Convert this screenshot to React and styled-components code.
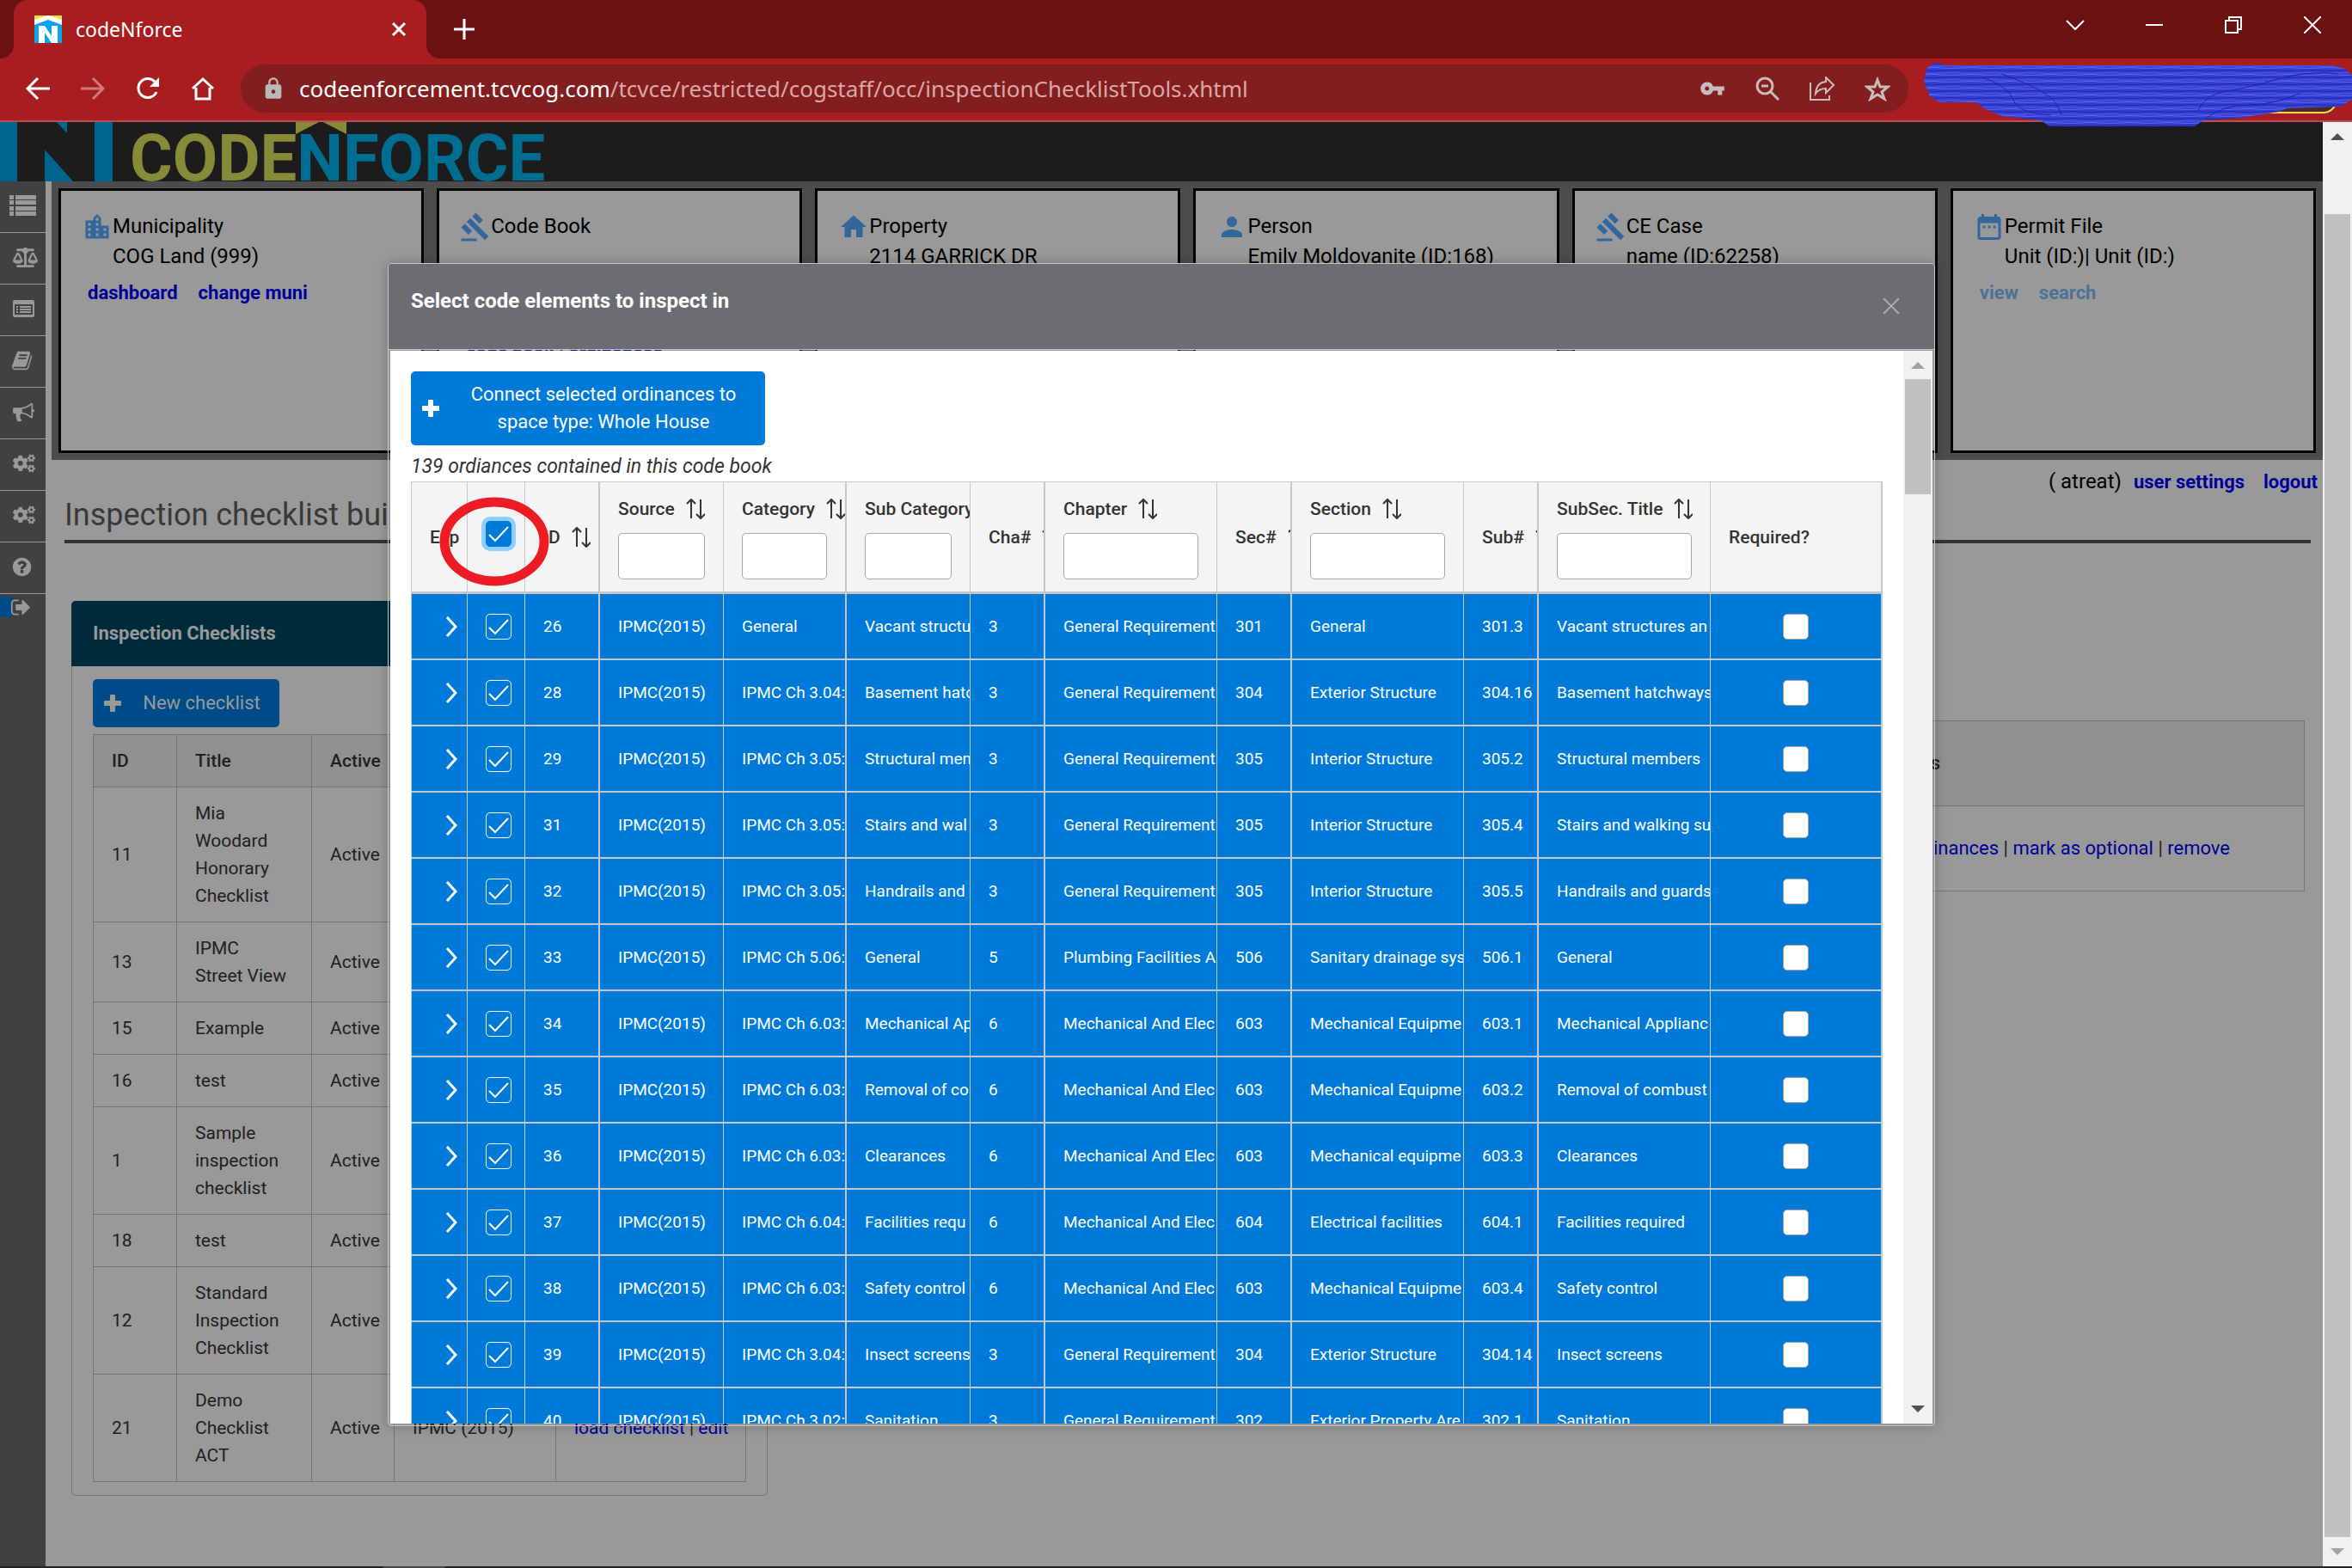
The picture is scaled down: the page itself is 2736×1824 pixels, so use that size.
import React from "react";
import styled, { createGlobalStyle } from "styled-components";
import { FaBalanceScale, FaCogs } from "react-icons/fa";
import { MdLocationCity, MdGavel, MdHome, MdPerson, MdDateRange, MdVpnKey, MdLock } from "react-icons/md";

const GlobalStyle = createGlobalStyle`
  *, *::before, *::after { box-sizing: border-box; }
  body { margin: 0; background: #999; font-family: Roboto, "Liberation Sans", sans-serif; }
  button, input { font: inherit; }
  h1, h2, p { margin: 0; }
`;

const Window = styled.div`
  display: flex;
  flex-direction: column;
  height: 100vh;
  overflow: hidden;
`;

/* ---------- browser chrome ---------- */

const Chrome = styled.header`
  position: relative;
  font-family: "Noto Sans", "Open Sans", sans-serif;
  color: #fff;
`;

const TabStrip = styled.div`
  display: flex;
  height: 68px;
  padding-left: 16px;
  background: #6b1211;
`;

const Tab = styled.div`
  position: relative;
  display: flex;
  align-items: center;
  gap: 16px;
  width: 480px;
  padding: 0 22px 0 24px;
  border-radius: 16px 16px 0 0;
  background: #a81d1f;
  font-size: 23px;

  &::before, &::after {
    content: "";
    position: absolute;
    bottom: 0;
    width: 16px;
    height: 16px;
  }
  &::before {
    left: -16px;
    background: radial-gradient(circle at 0 0, transparent 16px, #a81d1f 16px);
  }
  &::after {
    right: -16px;
    background: radial-gradient(circle at 100% 0, transparent 16px, #a81d1f 16px);
  }
`;

const TabTitle = styled.span`
  flex: 1;
`;

const IconButton = styled.button`
  display: grid;
  place-items: center;
  width: ${(p) => p.$w}px;
  height: ${(p) => p.$h || p.$w}px;
  padding: 0;
  border: 0;
  background: none;
  color: ${(p) => p.$color || "#fff"};
`;

const NewTab = styled(IconButton)`
  align-self: center;
  margin-left: 28px;
`;

const WindowControls = styled.div`
  display: flex;
  margin-left: auto;
`;

const Toolbar = styled.div`
  display: flex;
  align-items: center;
  gap: 24px;
  height: 74px;
  padding: 0 516px 2px 24px;
  border-bottom: 2px solid #b94f50;
  background: #a81d1f;
`;

const Omnibox = styled.div`
  display: flex;
  flex: 1;
  align-items: center;
  gap: 32px;
  height: 56px;
  padding: 0 20px 0 24px;
  border-radius: 28px;
  background: #821e1e;
  color: #c9bcbc;
`;

const Address = styled.span`
  display: flex;
  flex: 1;
  align-items: center;
  gap: 16px;
  color: #d9a7a7;
  font-size: 26px;
  white-space: nowrap;

  b { color: #fff; font-weight: 400; }
`;

const Scribble = styled.svg`
  position: absolute;
  top: 70px;
  right: 0;
  z-index: 5;
`;

/* ---------- page behind the dialog ---------- */

const Viewport = styled.div`
  display: flex;
  flex: 1;
  min-height: 0;
`;

const Page = styled.div`
  position: relative;
  display: flex;
  flex: 1;
  flex-direction: column;
  min-width: 0;
  overflow: hidden;
  background: #999;
`;

const Banner = styled.div`
  display: flex;
  align-items: flex-start;
  flex: none;
  height: 69px;
  overflow: hidden;
  background: #1c1c1c;
`;

const Wordmark = styled.div`
  position: relative;
  margin-left: 20px;
  color: #006e92;
  font-size: 76px;
  font-weight: 700;
  line-height: 84px;

  em { color: #868b38; font-style: normal; }
`;

const Roof = styled.svg`
  position: absolute;
  top: 0;
  left: 193px;
`;

const Shell = styled.div`
  display: flex;
  flex: 1;
  min-height: 0;
`;

const Sidebar = styled.nav`
  flex: none;
  width: 53px;
  background: #414143;
`;

const SideLink = styled.a`
  display: flex;
  align-items: center;
  height: 60px;
  padding: 0 0 3px ${(p) => p.$left || 15}px;
  border-bottom: 1px solid #999;
  color: #999;
`;

const SideLogout = styled.a`
  display: flex;
  align-items: center;
  height: 24px;
  margin-top: 3px;
  color: #999;

  &::before {
    content: "";
    width: 15px;
    height: 24px;
    border-radius: 0 5px 5px 0;
    background: #004b8a;
  }
  svg { margin-left: -3px; }
`;

const Main = styled.main`
  flex: 1;
  min-width: 0;
  margin-left: 7px;
`;

const Cards = styled.section`
  display: grid;
  grid-template-columns: repeat(6, 1fr);
  gap: 15px;
  padding: 8px;
  background: #4c4c4c;
`;

const Card = styled.article`
  height: 308px;
  padding: 24px;
  border: 3px solid #000;
  background: #999;
  color: #000;
  font-size: 24px;
  line-height: 35px;
`;

const CardHead = styled.div`
  display: flex;
  align-items: flex-start;
  white-space: nowrap;

  svg { flex: none; color: #33669b; }
`;

const CardLinks = styled.div`
  display: flex;
  gap: 24px;
  padding-left: 7px;
  margin-top: ${(p) => p.$top || 7}px;
`;

const StrongLink = styled.a`
  color: ${(p) => (p.$muted ? "#4c7394" : "#000099")};
  font-size: 22px;
  font-weight: 700;
  text-decoration: none;
`;

const UserBar = styled.div`
  display: flex;
  justify-content: flex-end;
  gap: 14px;
  padding: 8px 6px 0;
  font-size: 24px;
  line-height: 35px;

  a + a { margin-left: 8px; }
`;

const PageTitle = styled.h1`
  margin: 0 14px 0 15px;
  padding-bottom: 8px;
  border-bottom: 4px solid #333;
  color: #393939;
  font-size: 36px;
  font-weight: 400;
  line-height: 42px;
`;

const Panels = styled.div`
  display: flex;
  align-items: flex-start;
  justify-content: space-between;
  margin: 67px 21px 0 23px;
`;

const Panel = styled.section`
  width: 810px;
  border: 1px solid #777;
  border-radius: 5px;
`;

const PanelTitle = styled.h2`
  margin: -1px -1px 0;
  padding: 0 25px;
  border-radius: 5px 5px 0 0;
  background: #002b3d;
  color: #999;
  font-size: 22px;
  font-weight: 700;
  line-height: 76px;
`;

const PanelBody = styled.div`
  padding: 15px 24px 15px;
`;

const ActionButton = styled.button`
  display: flex;
  align-items: center;
  gap: 24px;
  width: ${(p) => p.$width}px;
  padding: ${(p) => p.$padY}px 21px ${(p) => p.$padY}px 13px;
  border: 0;
  border-radius: 5px;
  background: ${(p) => (p.$dim ? "#004b8a" : "#007ad9")};
  color: ${(p) => (p.$dim ? "#999" : "#fff")};
  font-size: 22px;
  line-height: 32px;

  svg { flex: none; }
  span { flex: 1; }
`;

const PlainTable = styled.table`
  width: ${(p) => p.$width};
  margin-top: ${(p) => p.$top}px;
  border-collapse: collapse;
  table-layout: fixed;
  color: #202020;
  font-size: ${(p) => p.$size}px;
  line-height: 32px;

  th, td {
    padding: ${(p) => p.$padY}px 21px;
    border: 1px solid #757575;
    text-align: left;
    white-space: pre-line;
  }
  td:last-child { white-space: nowrap; }
  th { background: #919191; font-weight: 500; }
  a { color: #000099; text-decoration: none; }
`;

/* ---------- dialog ---------- */

const Overlay = styled.div`
  position: absolute;
  inset: 0;
  display: flex;
  padding: 164px 451px 163px;
`;

const Dialog = styled.div`
  display: flex;
  flex: 1;
  flex-direction: column;
  min-width: 0;
  border: 1px solid #c8c8c8;
  border-radius: 5px;
  box-shadow: 0 0 14px rgba(0, 0, 0, 0.25);
`;

const DialogHead = styled.div`
  display: flex;
  justify-content: space-between;
  flex: none;
  height: 100px;
  padding: 25px 40px 0 26px;
  border-bottom: 1px solid #c8c8c8;
  border-radius: 4px 4px 0 0;
  background: #6c6d70;
  color: #fff;

  h2 { font-size: 24px; font-weight: 700; line-height: 36px; }
  button { margin-top: 14px; }
`;

const DialogBody = styled.div`
  display: flex;
  flex: 1;
  min-height: 0;
  margin: 1px 2px 2px;
  background: #fff;
`;

const ScrollArea = styled.div`
  flex: 1;
  min-width: 0;
  padding: 24px 24px 0;
  overflow: hidden;
`;

const Count = styled.p`
  margin-top: 8px;
  color: #333;
  font-size: 23px;
  font-style: italic;
  line-height: 34px;
`;

const TableWrap = styled.div`
  position: relative;
`;

const Ring = styled.svg`
  position: absolute;
  top: 18px;
  left: 33px;
  pointer-events: none;
`;

const DataTable = styled.table`
  width: 100%;
  border-top: 1px solid #c8c8c8;
  border-left: 1px solid #c8c8c8;
  border-collapse: separate;
  border-spacing: 0;
  table-layout: fixed;

  th, td {
    overflow: hidden;
    padding: 0 0 0 21px;
    border-right: 1px solid #c8c8c8;
    text-align: left;
    white-space: nowrap;
  }
  th:nth-child(2n + 3), td:nth-child(2n + 3) { border-right-width: 2px; }
  th {
    height: 130px;
    border-bottom: 3px solid #c8c8c8;
    background: #f4f4f4;
    color: #333;
    font-size: 21px;
    font-weight: 500;
    line-height: 32px;
  }
  td {
    height: 77px;
    border-bottom: 2px solid #c8c8c8;
    background: #007ad9;
    color: #fff;
    font-size: 19px;
    line-height: 32px;
  }
`;

const ColumnHead = styled.span`
  display: flex;
  align-items: center;
  gap: 13px;

  svg { flex: none; }
`;

const Filter = styled.input`
  display: block;
  width: calc(100% - 21px);
  height: 54px;
  margin-top: 12px;
  padding: 0 10px;
  border: 1px solid #a6a6a6;
  border-radius: 5px;
  background: #fff;
`;

const ExpandButton = styled.button`
  display: block;
  margin: 0 11px 0 auto;
  padding: 0;
  border: 0;
  background: none;
  line-height: 0;
`;

const CheckWrap = styled.label`
  display: grid;
  width: 30px;
  height: 30px;
  margin-bottom: ${(p) => (p.$raised ? "8px" : "0")};
  margin-left: ${(p) => (p.$center ? "63px" : "0")};

  input, svg { grid-area: 1 / 1; }
  svg { place-self: center; pointer-events: none; }
`;

const CheckInput = styled.input`
  appearance: none;
  width: 30px;
  height: 30px;
  margin: 0;
  border: 1px solid ${(p) => (p.$empty ? "#a6a6a6" : p.$focus ? "#007ad9" : "#fff")};
  border-radius: 5px;
  background: ${(p) => (p.$empty ? "#fff" : "#007ad9")};
  box-shadow: ${(p) => (p.$focus ? "0 0 0 5px #8dcdff" : "none")};
`;

/* ---------- scroll bars ---------- */

const Track = styled.div`
  display: grid;
  grid-template-rows: 33px ${(p) => p.$rows} 34px;
  flex: none;
  width: 34px;
  padding: 0 2px;
  background: #f1f1f1;
`;

const Thumb = styled.div`
  grid-row: 3;
  background: #c1c1c1;
`;

const Arrow = styled.svg`
  grid-row: ${(p) => p.$row};
  place-self: center;
`;

const BottomEdge = styled.footer`
  flex: none;
  height: 2px;
  background: linear-gradient(90deg, #222 446px, #484848 446px, #484848 518px, #222 518px);
`;

function ScrollBar({ rows, up, down }) {
  return (
    <Track $rows={rows}>
      <Arrow $row={1} width="16" height="8" viewBox="0 0 16 8"><path d="M0 8 8 0l8 8z" fill={up} /></Arrow>
      <Thumb />
      <Arrow $row={5} width="16" height="8" viewBox="0 0 16 8"><path d="M0 0h16L8 8z" fill={down} /></Arrow>
    </Track>
  );
}

function Glyph({ d, size = 28, box = 1792 }) {
  return <svg width={size} height={size} viewBox={`0 0 ${box} ${box}`} fill="currentColor"><path d={d} /></svg>;
}

function Line({ w, h, d, sw = 3, color = "currentColor", join = "miter" }) {
  return (
    <svg width={w} height={h} viewBox={`0 0 ${w} ${h}`} fill="none" stroke={color} strokeWidth={sw} strokeLinejoin={join}>
      <path d={d} />
    </svg>
  );
}

const BOOK = "M1639 478q40 57 18 129l-275 906q-19 64-76.5 107.5t-122.5 43.5h-923q-77 0-148.5-53.5t-99.5-131.5q-24-67-2-127 0-4 3-27t4-37q1-8-3-21.5t-3-19.5q2-11 8-21t16.5-23.5 16.5-23.5q23-38 45-91.5t30-91.5q3-10 .5-30t-.5-28q3-11 17-28t17-23q21-36 42-92t25-90q1-9-2.5-32t.5-28q4-13 22-30.5t22-22.5q19-26 42.5-84.5t27.5-96.5q1-8-3-25.5t-2-26.5q2-8 9-18t18-23 17-21q8-12 16.5-30.5t15-35 16-36 19.5-32 26.5-23.5 36-11.5 47.5 5.5l-1 3q38-9 51-9h761q74 0 114 56t18 130l-274 906q-36 119-71.5 153.5t-128.5 34.5h-869q-27 0-38 15-11 16-1 43 24 70 144 70h923q29 0 56-15.5t35-41.5l300-987q7-22 5-57 38 15 59 43zm-1064 2q-4 13 2 22.5t20 9.5h608q13 0 25.5-9.5t16.5-22.5l21-64q4-13-2-22.5t-20-9.5h-608q-13 0-25.5 9.5t-16.5 22.5zm-83 256q-4 13 2 22.5t20 9.5h608q13 0 25.5-9.5t16.5-22.5l21-64q4-13-2-22.5t-20-9.5h-608q-13 0-25.5 9.5t-16.5 22.5z";
const HORN = "M1664 640q53 0 90.5 37.5t37.5 90.5-37.5 90.5-90.5 37.5v384q0 52-38 90t-90 38q-417-347-812-380-58 19-91 66t-31 100.5 40 92.5q-20 33-23 65.5t6 58 33.5 55 48 50 61.5 50.5q-29 58-111.5 83t-168.5 11.5-132-55.5q-7-23-29.5-87.5t-32-94.5-23-89-15-101 3.5-98.5 22-110.5h-122q-66 0-113-47t-47-113v-192q0-66 47-113t113-47h480q435 0 896-384 52 0 90 38t38 90v384zm-128 604v-954q-394 302-768 343v270q377 42 768 341z";
const HELP = "M1024 1376v-192q0-14-9-23t-23-9h-192q-14 0-23 9t-9 23v192q0 14 9 23t23 9h192q14 0 23-9t9-23zm256-672q0-88-55.5-163t-138.5-116-170-41q-243 0-371 213-15 24 8 42l132 100q7 6 19 6 16 0 25-12 53-68 86-92 34-24 86-24 48 0 85.5 26t37.5 59q0 38-20 61t-68 45q-63 28-115.5 86.5t-52.5 125.5v36q0 14 9 23t23 9h192q14 0 23-9t9-23q0-19 21.5-49.5t54.5-49.5q32-18 49-28.5t46-35 44.5-48 28-60.5 12.5-81zm384 192q0 209-103 385.5t-279.5 279.5-385.5 103-385.5-103-279.5-279.5-103-385.5 103-385.5 279.5-279.5 385.5-103 385.5 103 279.5 279.5 103 385.5z";
const SIGN_OUT = "M704 1440q0 4 1 20t.5 26.5-3 23.5-10 19.5-20.5 6.5h-320q-119 0-203.5-84.5t-84.5-203.5v-704q0-119 84.5-203.5t203.5-84.5h320q13 0 22.5 9.5t9.5 22.5q0 4 1 20t.5 26.5-3 23.5-10 19.5-20.5 6.5h-320q-66 0-113 47t-47 113v704q0 66 47 113t113 47h312l11.5 1 11.5 3 8 5.5 7 9 2 13.5zm928-544q0 26-19 45l-544 544q-19 19-45 19t-45-19-19-45v-288h-448q-26 0-45-19t-19-45v-384q0-26 19-45t45-19h448v-288q0-26 19-45t45-19 45 19l544 544q19 19 19 45z";

const Plus = () => (
  <svg width="20" height="20" viewBox="0 0 20 20" fill="currentColor">
    <path d="M8 0h4q1 0 1 1v6h6q1 0 1 1v4q0 1-1 1h-6v6q0 1-1 1H8q-1 0-1-1v-6H1q-1 0-1-1V8q0-1 1-1h6V1q0-1 1-1z" />
  </svg>
);

const SortArrows = () => (
  <Line w={22} h={24} sw={2} color="#333" d="M6 23V1M1 6l5-5 5 5M17 1v22M12 18l5 5 5-5" />
);

const Tick = () => <Line w={24} h={20} sw={2} color="#fff" d="M1 11l7 7L23 2" />;

function Check({ label, empty, focus, center }) {
  return (
    <CheckWrap $center={center} $raised={focus}>
      <CheckInput type="checkbox" aria-label={label} defaultChecked={!empty} $empty={empty} $focus={focus} />
      {!empty && <Tick />}
    </CheckWrap>
  );
}

const COLUMNS = [
  { name: "Source", width: 144, filter: true },
  { name: "Category", width: 143, filter: true },
  { name: "Sub Category", width: 144, filter: true },
  { name: "Cha#", width: 87 },
  { name: "Chapter", width: 200, filter: true },
  { name: "Sec#", width: 87 },
  { name: "Section", width: 200, filter: true },
  { name: "Sub#", width: 87 },
  { name: "SubSec. Title", width: 200, filter: true },
];

const GR = "General Requirement";
const ME = "Mechanical And Elec";
const ROWS = [
  [26, "General", "Vacant structu", 3, GR, 301, "General", "301.3", "Vacant structures an"],
  [28, "IPMC Ch 3.04:", "Basement hatc", 3, GR, 304, "Exterior Structure", "304.16", "Basement hatchways"],
  [29, "IPMC Ch 3.05:", "Structural mem", 3, GR, 305, "Interior Structure", "305.2", "Structural members"],
  [31, "IPMC Ch 3.05:", "Stairs and wal", 3, GR, 305, "Interior Structure", "305.4", "Stairs and walking su"],
  [32, "IPMC Ch 3.05:", "Handrails and", 3, GR, 305, "Interior Structure", "305.5", "Handrails and guards"],
  [33, "IPMC Ch 5.06:", "General", 5, "Plumbing Facilities A", 506, "Sanitary drainage sys", "506.1", "General"],
  [34, "IPMC Ch 6.03:", "Mechanical Ap", 6, ME, 603, "Mechanical Equipme", "603.1", "Mechanical Applianc"],
  [35, "IPMC Ch 6.03:", "Removal of co", 6, ME, 603, "Mechanical Equipme", "603.2", "Removal of combust"],
  [36, "IPMC Ch 6.03:", "Clearances", 6, ME, 603, "Mechanical equipme", "603.3", "Clearances"],
  [37, "IPMC Ch 6.04:", "Facilities requ", 6, ME, 604, "Electrical facilities", "604.1", "Facilities required"],
  [38, "IPMC Ch 6.03:", "Safety control", 6, ME, 603, "Mechanical Equipme", "603.4", "Safety control"],
  [39, "IPMC Ch 3.04:", "Insect screens", 3, GR, 304, "Exterior Structure", "304.14", "Insect screens"],
  [40, "IPMC Ch 3.02:", "Sanitation", 3, GR, 302, "Exterior Property Are", "302.1", "Sanitation"],
];

const CHECKLISTS = [
  [11, "Mia Woodard Honorary Checklist"],
  [13, "IPMC\nStreet View"],
  [15, "Example"],
  [16, "test"],
  [1, "Sample inspection checklist"],
  [18, "test"],
  [12, "Standard Inspection Checklist"],
  [21, "Demo Checklist ACT", "IPMC (2015)"],
];

const CARDS = [
  { icon: MdLocationCity, title: "Municipality", detail: "COG Land (999)", links: ["dashboard", "change muni"] },
  { icon: MdGavel, title: "Code Book", detail: "", links: ["code book | ordinances"], top: 111 },
  { icon: MdHome, title: "Property", detail: "2114 GARRICK DR" },
  { icon: MdPerson, title: "Person", detail: "Emily Moldovanite (ID:168)" },
  { icon: MdGavel, title: "CE Case", detail: "name (ID:62258)" },
  { icon: MdDateRange, title: "Permit File", detail: "Unit (ID:)| Unit (ID:)", links: ["view", "search"], muted: true },
];

function BrowserChrome() {
  return (
    <Chrome>
      <TabStrip>
        <Tab>
          <svg width="32" height="32" viewBox="0 0 32 32">
            <path d="M0 0h32v32H0z" fill="#fff" />
            <path d="M0 0h32v5L16 0 0 5z" fill="#dfe34a" />
            <path d="M0 11 16 5l16 6v21H0z" fill="#0aa5e8" />
            <path d="M5 32V12h7l8 12V12h7v20h-7l-8-12v12z" fill="#fff" />
          </svg>
          <TabTitle>codeNforce</TabTitle>
          <IconButton aria-label="Close tab" $w={20}><Line w={16} h={16} d="M1 1l14 14M15 1 1 15" /></IconButton>
        </Tab>
        <NewTab aria-label="New tab" $w={32}><Line w={24} h={24} d="M12 0v24M0 12h24" /></NewTab>
        <WindowControls>
          <IconButton aria-label="Search tabs" $w={92} $h={58}><Line w={22} h={12} sw={2} d="M1 1l10 10L21 1" /></IconButton>
          <IconButton aria-label="Minimise" $w={92} $h={58}><Line w={20} h={2} sw={2} d="M0 1h20" /></IconButton>
          <IconButton aria-label="Restore" $w={92} $h={58}><Line w={20} h={20} sw={2} d="M1 5h14v14H1zM5 5V1h14v14h-4" /></IconButton>
          <IconButton aria-label="Close" $w={92} $h={58}><Line w={20} h={20} sw={2} d="M0 0l20 20M20 0 0 20" /></IconButton>
        </WindowControls>
      </TabStrip>
      <Toolbar>
        <IconButton aria-label="Back" $w={40}><Line w={28} h={26} d="M28 13H3M14 1 2 13l12 12" /></IconButton>
        <IconButton aria-label="Forward" $w={40} $color="#cf7a7b"><Line w={28} h={26} d="M0 13h25M14 1l12 12-12 12" /></IconButton>
        <IconButton aria-label="Reload" $w={40}>
          <svg width="28" height="28" viewBox="0 0 28 28">
            <path d="M24 18A11 11 0 1 1 22 6" fill="none" stroke="#fff" strokeWidth="3" />
            <path d="M27 1v11H16z" fill="#fff" />
          </svg>
        </IconButton>
        <IconButton aria-label="Home" $w={40}><Line w={28} h={28} d="M6 13v13h16V13M2 14 14 3l12 11" /></IconButton>
        <Omnibox>
          <Address><MdLock size={28} color="#b9b9bb" /><span><b>codeenforcement.tcvcog.com</b>/tcvce/restricted/cogstaff/occ/inspectionChecklistTools.xhtml</span></Address>
          <IconButton aria-label="Passwords" $w={32} $color="inherit"><MdVpnKey size={30} /></IconButton>
          <IconButton aria-label="Zoom" $w={32} $color="inherit"><Line w={28} h={28} d="M17 17l10 10M20 11a9 9 0 1 1-18 0 9 9 0 0 1 18 0zM7 11h8" /></IconButton>
          <IconButton aria-label="Share" $w={32} $color="inherit"><Line w={30} h={28} sw={2} d="M1 7v20h22v-5M19 1l9 9-9 9v-5q-8 0-12 6 1-13 12-14z" /></IconButton>
          <IconButton aria-label="Bookmark" $w={32} $color="inherit"><Line w={30} h={29} sw={3} d="M15 4l3 8h9l-7 6 3 8-8-5-8 5 3-8-7-6h9z" /></IconButton>
        </Omnibox>
      </Toolbar>
      <Scribble width="500" height="78" viewBox="0 0 500 78">
        <defs>
          <pattern id="weave" width="46" height="8" patternUnits="userSpaceOnUse">
            <path d="M0 1q12-1 23 0t23 0" stroke="#5a66f2" fill="none" />
            <path d="M0 4q14 1 26 0t20 0" stroke="#2326a8" fill="none" />
            <path d="M0 7q10 1 20 0t26 0" stroke="#4d5ae8" fill="none" />
          </pattern>
        </defs>
        <path d="M404 50h78q-6 11-14 11h-64z" fill="#4a2a22" stroke="#ffd84d" strokeWidth="2" />
        <path d="M2 25 5 10 12 4l7-1 7 3h450l16 4 8 8v28l-14 8-62 2-9 4-44 7-44 3-10 7H148l-10-7-46-5-22-10-6-6H20L9 42z" fill="#343fd2" />
        <path d="M2 25 5 10 12 4l7-1 7 3h450l16 4 8 8v28l-14 8-62 2-9 4-44 7-44 3-10 7H148l-10-7-46-5-22-10-6-6H20L9 42z" fill="url(#weave)" />
        <path d="M70 20q30 10 36 26t44 18M92 16q34 12 50 22t20 26M320 60q8-20 34-24t60-14 70-6M330 68q20-16 50-16t60-14" stroke="#2023a0" fill="none" />
      </Scribble>
    </Chrome>
  );
}

function SideNav() {
  return (
    <Sidebar>
      <SideLink $left={11} href="#list" aria-label="List">
        <svg width="31" height="24" viewBox="0 0 31 24" fill="currentColor">
          <path d="M0 0h5v5H0zM7 0h24v5H7zM0 6h5v5H0zM7 6h24v5H7zM0 13h5v5H0zM7 13h24v5H7zM0 19h5v5H0zM7 19h24v5H7z" />
        </svg>
      </SideLink>
      <SideLink href="#cases" aria-label="Cases"><FaBalanceScale size={29} /></SideLink>
      <SideLink href="#records" aria-label="Records">
        <svg width="25" height="20" viewBox="0 0 25 20" fill="currentColor">
          <path fillRule="evenodd" d="M2 0h21q2 0 2 2v16q0 2-2 2H2q-2 0-2-2V2q0-2 2-2zM2 5v12h21V5z" />
          <path d="M4 7h2v2H4zM8 7h13v2H8zM4 10h2v2H4zM8 10h13v2H8zM4 13h2v2H4zM8 13h13v2H8z" />
        </svg>
      </SideLink>
      <SideLink $left={14} href="#code" aria-label="Code book"><Glyph d={BOOK} size={25} /></SideLink>
      <SideLink href="#notices" aria-label="Notices"><Glyph d={HORN} size={25} /></SideLink>
      <SideLink href="#tools" aria-label="Tools"><FaCogs size={26} /></SideLink>
      <SideLink href="#settings" aria-label="Settings"><FaCogs size={26} /></SideLink>
      <SideLink $left={13} href="#help" aria-label="Help"><Glyph d={HELP} size={25} /></SideLink>
      <SideLogout href="#logout" aria-label="Log out"><Glyph d={SIGN_OUT} size={25} /></SideLogout>
    </Sidebar>
  );
}

function OrdinanceDialog() {
  return (
    <Overlay>
      <Dialog role="dialog" aria-labelledby="dialog-title">
        <DialogHead>
          <h2 id="dialog-title">Select code elements to inspect in</h2>
          <IconButton aria-label="Close dialog" $w={20} $color="#a9aaac"><Line w={20} h={20} sw={2} d="M1 1l18 18M19 1 1 19" /></IconButton>
        </DialogHead>
        <DialogBody>
          <ScrollArea>
            <ActionButton $width={412} $padY={11}><Plus /><span>Connect selected ordinances to space type: Whole House</span></ActionButton>
            <Count>139 ordiances contained in this code book</Count>
            <TableWrap>
              <DataTable>
                <colgroup>
                  <col style={{ width: 65 }} /><col style={{ width: 67 }} /><col style={{ width: 87 }} />
                  {COLUMNS.map((c) => <col key={c.name} style={{ width: c.width }} />)}
                  <col />
                </colgroup>
                <thead>
                  <tr>
                    <th>Exp</th>
                    <th><Check label="Select all" focus /></th>
                    <th><ColumnHead>ID<SortArrows /></ColumnHead></th>
                    {COLUMNS.map((c) => (
                      <th key={c.name}>
                        <ColumnHead>{c.name}<SortArrows /></ColumnHead>
                        {c.filter && <Filter type="text" aria-label={`Filter by ${c.name}`} />}
                      </th>
                    ))}
                    <th>Required?</th>
                  </tr>
                </thead>
                <tbody>
                  {ROWS.map(([id, ...rest]) => (
                    <tr key={id}>
                      <td><ExpandButton aria-label={`Expand ${id}`}><Line w={14} h={24} color="#fff" d="M2 1l10 11L2 23" /></ExpandButton></td>
                      <td><Check label={`Select ${id}`} /></td>
                      <td>{id}</td>
                      <td>IPMC(2015)</td>
                      {rest.map((cell, i) => <td key={i}>{cell}</td>)}
                      <td><Check label={`Require ${id}`} empty center /></td>
                    </tr>
                  ))}
                </tbody>
              </DataTable>
              <Ring width="128" height="104" viewBox="0 0 128 104">
                <ellipse cx="64" cy="52" rx="58" ry="46" fill="none" stroke="#ed1c24" strokeWidth="11" />
              </Ring>
            </TableWrap>
          </ScrollArea>
          <ScrollBar rows="0fr 134fr 1047fr" up="#a3a3a3" down="#505050" />
        </DialogBody>
      </Dialog>
    </Overlay>
  );
}

export default function App() {
  return (
    <Window>
      <GlobalStyle />
      <BrowserChrome />
      <Viewport>
        <Page>
          <Banner>
            <svg width="131" height="69" viewBox="0 0 131 69" fill="#00658e">
              <path d="M0 0h20v69H0zM110 0h21v69h-21zM66 0h12v13zM52 32l33 37H52z" />
            </svg>
            <Wordmark>
              <em>CODE</em>NFORCE
              <Roof width="59" height="14" viewBox="0 0 59 14"><path d="M0 0h27L0 14zM32 0h27v14z" fill="#868b38" /></Roof>
            </Wordmark>
          </Banner>
          <Shell>
            <SideNav />
            <Main>
              <Cards>
                {CARDS.map(({ icon: Icon, title, detail, links, muted, top }) => (
                  <Card key={title}>
                    <CardHead><Icon size={36} /><div>{title}<br />{detail}</div></CardHead>
                    {links && (
                      <CardLinks $top={top}>
                        {links.map((l) => <StrongLink key={l} href="#card" $muted={muted}>{l}</StrongLink>)}
                      </CardLinks>
                    )}
                  </Card>
                ))}
              </Cards>
              <UserBar>
                <span>( atreat)</span>
                <StrongLink href="#user">user settings</StrongLink>
                <StrongLink href="#logout">logout</StrongLink>
              </UserBar>
              <PageTitle>Inspection checklist builder</PageTitle>
              <Panels>
                <Panel>
                  <PanelTitle>Inspection Checklists</PanelTitle>
                  <PanelBody>
                    <ActionButton $dim $width={217} $padY={12}><Plus /><span>New checklist</span></ActionButton>
                    <PlainTable $width="100%" $top={8} $padY={14} $size={21}>
                      <colgroup>
                        <col style={{ width: 97 }} /><col style={{ width: 157 }} /><col style={{ width: 96 }} />
                        <col style={{ width: 188 }} /><col />
                      </colgroup>
                      <thead><tr><th>ID</th><th>Title</th><th>Active</th><th /><th /></tr></thead>
                      <tbody>
                        {CHECKLISTS.map(([id, title, book]) => (
                          <tr key={id}>
                            <td>{id}</td><td>{title}</td><td>Active</td><td>{book}</td>
                            <td>{book && <><a href="#load">load checklist</a> | <a href="#edit">edit</a></>}</td>
                          </tr>
                        ))}
                      </tbody>
                    </PlainTable>
                  </PanelBody>
                </Panel>
                <PlainTable $width="521px" $top={139} $padY={33} $size={22}>
                  <thead><tr><th>Actions</th></tr></thead>
                  <tbody>
                    <tr><td><a href="#ord">list ordinances</a> | <a href="#opt">mark as optional</a> | <a href="#rm">remove</a></td></tr>
                  </tbody>
                </PlainTable>
              </Panels>
            </Main>
          </Shell>
          <OrdinanceDialog />
        </Page>
        <ScrollBar rows="74fr 1538fr 0fr" up="#505050" down="#a3a3a3" />
      </Viewport>
      <BottomEdge />
    </Window>
  );
}
